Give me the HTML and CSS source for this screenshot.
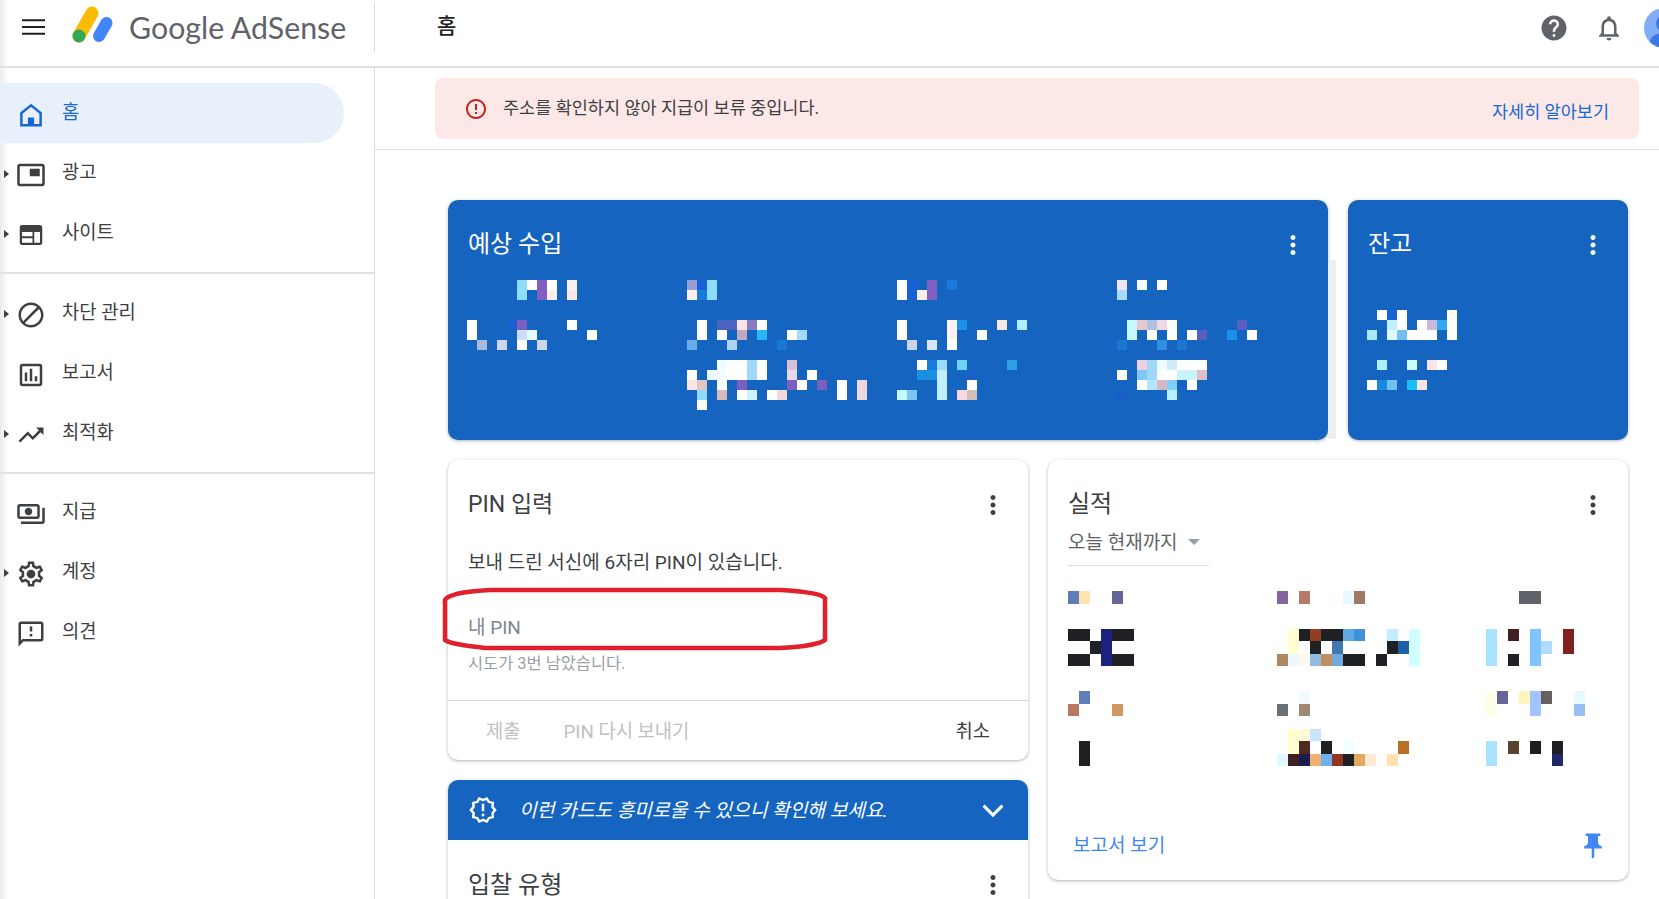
FILE: index.html
```html
<!DOCTYPE html>
<html lang="ko">
<head>
<meta charset="utf-8">
<title>Google AdSense</title>
<link rel="stylesheet" href="styles.css">
</head>
<body>
<header class="topbar">
  <div class="brand">
    <svg class="menu-icon" viewBox="0 0 24 16"><path d="M0 0h24v2H0zM0 7h24v2H0zM0 14h24v2H0z"/></svg>
    <svg class="logo" viewBox="0 0 46 44"><path d="M21 8 8 31" stroke="#fbbc04" stroke-width="13" stroke-linecap="round"/><path d="M35.500 18 28 31" stroke="#4285f4" stroke-width="12" stroke-linecap="round"/><circle cx="8" cy="31" r="6.500" fill="#34a853"/></svg>
    <span class="brand-name">Google AdSense</span>
  </div>
  <div class="page-title">홈</div>
  <div class="top-actions">
    <svg class="icon grey" viewBox="0 0 24 24"><path d="M12 2C6.480 2 2 6.480 2 12s4.480 10 10 10 10-4.480 10-10S17.520 2 12 2zm1 17h-2v-2h2v2zm2.070-7.750l-.9.920C13.450 12.900 13 13.500 13 15h-2v-.5c0-1.100.45-2.100 1.170-2.830l1.240-1.260c.37-.36.59-.86.59-1.410 0-1.100-.9-2-2-2s-2 .9-2 2H8c0-2.210 1.790-4 4-4s4 1.790 4 4c0 .88-.36 1.680-.93 2.250z"/></svg>
    <svg class="icon grey" viewBox="0 0 24 24"><path d="M12 22c1.100 0 2-.9 2-2h-4c0 1.100.9 2 2 2zm6-6v-5c0-3.070-1.630-5.640-4.500-6.320V4c0-.83-.67-1.500-1.500-1.500s-1.500.67-1.500 1.500v.68C7.640 5.360 6 7.920 6 11v5l-2 2v1h16v-1l-2-2zm-2 1H8v-6c0-2.480 1.510-4.500 4-4.500s4 2.020 4 4.500v6z"/></svg>
    <svg class="avatar" viewBox="0 0 40 40"><circle cx="20" cy="20" r="20" fill="#82adf5"/><circle cx="20" cy="15.500" r="8" fill="#3b78e7"/><path d="M6 34c0-6 7-9 14-9s14 3 14 9a20 20 0 0 1-28 0z" fill="#3b78e7"/></svg>
  </div>
</header>

<div class="layout">
  <nav class="sidebar">
    <div class="nav-group first">
      <a class="nav-item active">
        <svg class="icon" viewBox="0 0 24 24"><path class="home-line" d="M12 4.300 4.300 10.500v9.700h15.400v-9.700z"/><path d="M9.500 14h5v6h-5z"/></svg>
        <span>홈</span>
      </a>
      <a class="nav-item has-children">
        <svg class="icon" viewBox="0 0 24 24"><path d="M19 7h-8v6h8V7zm2-4H3c-1.100 0-2 .9-2 2v14c0 1.100.9 2 2 2h18c1.100 0 2-.9 2-2V5c0-1.100-.9-2-2-2zm0 16.010H3V4.980h18v14.030z"/></svg>
        <span>광고</span>
      </a>
      <a class="nav-item has-children">
        <svg class="icon" viewBox="0 0 24 24"><path fill-rule="evenodd" d="M5 4h14a2 2 0 0 1 2 2v12a2 2 0 0 1-2 2H5a2 2 0 0 1-2-2V6a2 2 0 0 1 2-2zM4.800 9.500V13h8.400V9.500zM14.600 9.500v8.700h4.600V9.500zM4.800 14.500v3.700h8.400v-3.700z"/></svg>
        <span>사이트</span>
      </a>
    </div>
    <div class="nav-group">
      <a class="nav-item has-children">
        <svg class="icon" viewBox="0 0 24 24"><path d="M12 2C6.480 2 2 6.480 2 12s4.480 10 10 10 10-4.480 10-10S17.520 2 12 2zM4 12c0-4.420 3.580-8 8-8 1.850 0 3.550.63 4.900 1.690L5.690 16.900C4.630 15.550 4 13.850 4 12zm8 8c-1.850 0-3.550-.63-4.900-1.690L18.310 7.100C19.370 8.450 20 10.150 20 12c0 4.420-3.580 8-8 8z"/></svg>
        <span>차단 관리</span>
      </a>
      <a class="nav-item">
        <svg class="icon" viewBox="0 0 24 24"><path d="M19 3H5c-1.100 0-2 .9-2 2v14c0 1.100.9 2 2 2h14c1.100 0 2-.9 2-2V5c0-1.100-.9-2-2-2zm0 16H5V5h14v14zM7 10h2v7H7zm4-3h2v10h-2zm4 6h2v4h-2z"/></svg>
        <span>보고서</span>
      </a>
      <a class="nav-item has-children">
        <svg class="icon" viewBox="0 0 24 24"><path d="M16 6l2.290 2.290-4.880 4.880-4-4L2 16.590 3.410 18l6-6 4 4 6.300-6.290L22 12V6z"/></svg>
        <span>최적화</span>
      </a>
    </div>
    <div class="nav-group last">
      <a class="nav-item">
        <svg class="icon" viewBox="0 0 24 24"><path d="M19 14V6c0-1.100-.9-2-2-2H3c-1.100 0-2 .9-2 2v8c0 1.100.9 2 2 2h14c1.100 0 2-.9 2-2zm-2 0H3V6h14v8zm-7-7c-1.660 0-3 1.340-3 3s1.340 3 3 3 3-1.340 3-3-1.340-3-3-3zm13 0v11c0 1.100-.9 2-2 2H4v-2h17V7h2z"/></svg>
        <span>지급</span>
      </a>
      <a class="nav-item has-children">
        <svg class="icon" viewBox="0 0 24 24"><path d="M19.430 12.980c.04-.32.07-.64.07-.98 0-.34-.03-.66-.07-.98l2.110-1.650c.19-.15.24-.42.12-.64l-2-3.460c-.09-.16-.26-.25-.44-.25-.06 0-.12.01-.17.03l-2.490 1c-.52-.4-1.080-.73-1.690-.98l-.38-2.650C14.460 2.180 14.250 2 14 2h-4c-.25 0-.46.18-.49.42l-.38 2.650c-.61.25-1.170.59-1.690.98l-2.490-1c-.06-.02-.12-.03-.18-.03-.17 0-.34.09-.43.25l-2 3.460c-.13.22-.07.49.12.64l2.110 1.650c-.04.32-.07.65-.07.98 0 .33.03.66.07.98l-2.110 1.650c-.19.15-.24.42-.12.64l2 3.460c.09.16.26.25.44.25.06 0 .12-.01.17-.03l2.490-1c.52.4 1.080.73 1.690.98l.38 2.650c.03.24.24.42.49.42h4c.25 0 .46-.18.49-.42l.38-2.650c.61-.25 1.170-.59 1.690-.98l2.490 1c.06.02.12.03.18.03.17 0 .34-.09.43-.25l2-3.460c.12-.22.07-.49-.12-.64l-2.110-1.650zm-1.980-1.710c.04.31.05.52.05.73 0 .21-.02.43-.05.73l-.14 1.130.89.7 1.080.84-.7 1.210-1.270-.51-1.040-.42-.9.68c-.43.32-.84.56-1.250.73l-1.060.43-.16 1.130-.2 1.350h-1.400l-.19-1.350-.16-1.130-1.060-.43c-.43-.18-.83-.41-1.230-.71l-.91-.7-1.060.43-1.270.51-.7-1.210 1.080-.84.89-.7-.14-1.130c-.03-.31-.05-.54-.05-.74s.02-.43.05-.73l.14-1.130-.89-.7-1.080-.84.7-1.210 1.270.51 1.040.42.9-.68c.43-.32.84-.56 1.250-.73l1.060-.43.16-1.130.2-1.350h1.390l.19 1.350.16 1.130 1.060.43c.43.18.83.41 1.230.71l.91.7 1.060-.43 1.270-.51.7 1.210-1.070.85-.89.7.14 1.130z"/><circle cx="12" cy="12" r="3.500"/></svg>
        <span>계정</span>
      </a>
      <a class="nav-item">
        <svg class="icon" viewBox="0 0 24 24"><path d="M20 2H4c-1.100 0-1.990.9-1.990 2L2 22l4-4h14c1.100 0 2-.9 2-2V4c0-1.100-.9-2-2-2zm0 14H5.170L4 17.170V4h16v12zm-9-4h2v2h-2zm0-6h2v4h-2z"/></svg>
        <span>의견</span>
      </a>
    </div>
  </nav>

  <main class="main">
    <div class="alert-wrap">
      <div class="alert">
        <svg class="alert-icon" viewBox="0 0 24 24"><path d="M11 15h2v2h-2zm0-8h2v6h-2zm.99-5C6.470 2 2 6.480 2 12s4.470 10 9.990 10C17.520 22 22 17.520 22 12S17.520 2 11.990 2zM12 20c-4.420 0-8-3.580-8-8s3.580-8 8-8 8 3.580 8 8-3.580 8-8 8z"/></svg>
        <span class="alert-text">주소를 확인하지 않아 지급이 보류 중입니다.</span>
        <a class="alert-link">자세히 알아보기</a>
      </div>
    </div>

    <div class="content">
      <div class="row-top">
        <section class="card blue earnings">
          <div class="card-head">
            <h2>예상 수입</h2>
            <svg class="icon kebab" viewBox="0 0 24 24"><path d="M12 8c1.100 0 2-.9 2-2s-.9-2-2-2-2 .9-2 2 .9 2 2 2zm0 2c-1.100 0-2 .9-2 2s.9 2 2 2 2-.9 2-2-.9-2-2-2zm0 6c-1.100 0-2 .9-2 2s.9 2 2 2 2-.9 2-2-.9-2-2-2z"/></svg>
          </div>
          <div class="stats">
            <svg class="mosaic" viewBox="0 0 20 13">
              <rect x="5" y="0" fill="#8fdcff"/><rect x="5" y="1" fill="#8fdcff"/><rect x="6" y="0" fill="#fff"/><rect x="7" y="0" fill="#8060c0"/><rect x="7" y="1" fill="#8060c0"/><rect x="8" y="0" fill="#fff"/><rect x="8" y="1" fill="#fdeef0"/><rect x="10" y="0" fill="#fdf0f0"/><rect x="10" y="1" fill="#f8e8e8"/>
              <rect x="0" y="4" fill="#fff"/><rect x="0" y="5" fill="#fff"/><rect x="1" y="6" fill="#a9b9dc"/><rect x="3" y="6" fill="#ccd5ec"/><rect x="4" y="4" fill="#1a5fd0"/><rect x="5" y="4" fill="#7a5fc0"/><rect x="5" y="5" fill="#c8defa"/><rect x="5" y="6" fill="#fff"/><rect x="6" y="5" fill="#ebfaff"/><rect x="7" y="6" fill="#ccd5ec"/><rect x="10" y="4" fill="#fff"/><rect x="12" y="5" fill="#fff"/>
            </svg>
            <svg class="mosaic" viewBox="0 0 20 13">
              <rect x="0" y="0" fill="#9a9dcf"/><rect x="0" y="1" fill="#fff0ee"/><rect x="1" y="0" fill="#1760d8"/><rect x="1" y="1" fill="#1a7ad8"/><rect x="2" y="0" fill="#8fdcff"/><rect x="2" y="1" fill="#8fdcff"/>
              <rect x="0" y="6" fill="#6aaee8"/><rect x="1" y="4" fill="#fff"/><rect x="1" y="5" fill="#fff"/><rect x="3" y="4" fill="#4a62c0"/><rect x="3" y="5" fill="#fff"/><rect x="4" y="4" fill="#4a62c0"/><rect x="4" y="6" fill="#b0d4f5"/><rect x="5" y="4" fill="#fde4e4"/><rect x="5" y="5" fill="#c0a8c0"/><rect x="6" y="4" fill="#8a7cc0"/><rect x="7" y="4" fill="#fff"/><rect x="7" y="5" fill="#2ab8f5"/><rect x="9" y="6" fill="#1a78d0"/><rect x="10" y="5" fill="#fff"/><rect x="11" y="5" fill="#a0dcff"/>
              <rect x="0" y="9" fill="#fff"/><rect x="0" y="10" fill="#fde4e4"/><rect x="1" y="10" fill="#e0c8c0"/><rect x="1" y="11" fill="#8fdcff"/><rect x="1" y="12" fill="#fff"/><rect x="2" y="9" fill="#eef8ff"/><rect x="3" y="8" fill="#f0fcff"/><rect x="3" y="9" fill="#f4fcff"/><rect x="3" y="10" fill="#fff"/><rect x="3" y="11" fill="#d8b8b8"/><rect x="4" y="8" fill="#fff"/><rect x="4" y="9" fill="#fff"/><rect x="5" y="8" fill="#fff"/><rect x="5" y="9" fill="#fff"/><rect x="5" y="10" fill="#7a5fc0"/><rect x="5" y="11" fill="#fff"/><rect x="6" y="8" fill="#a0d8fa"/><rect x="6" y="9" fill="#a0d8fa"/><rect x="6" y="11" fill="#d0f4ff"/><rect x="7" y="8" fill="#fff"/><rect x="7" y="9" fill="#fff"/><rect x="8" y="11" fill="#fff"/><rect x="9" y="11" fill="#f4d8dc"/><rect x="10" y="8" fill="#d8c0d8"/><rect x="10" y="9" fill="#e8d8e4"/><rect x="10" y="10" fill="#7a5fc0"/><rect x="11" y="10" fill="#fff"/><rect x="12" y="9" fill="#fff"/><rect x="13" y="10" fill="#7a5fc0"/><rect x="15" y="10" fill="#fff"/><rect x="15" y="11" fill="#fff"/><rect x="17" y="10" fill="#eed8e0"/><rect x="17" y="11" fill="#eed8e0"/>
            </svg>
            <svg class="mosaic" viewBox="0 0 20 13">
              <rect x="0" y="0" fill="#fff"/><rect x="0" y="1" fill="#fff"/><rect x="1" y="0" fill="#1760d8"/><rect x="1" y="1" fill="#1760d8"/><rect x="2" y="1" fill="#fdeee8"/><rect x="3" y="0" fill="#8060c0"/><rect x="3" y="1" fill="#8060c0"/><rect x="5" y="0" fill="#1a78d8"/>
              <rect x="0" y="4" fill="#fff"/><rect x="0" y="5" fill="#fff"/><rect x="1" y="6" fill="#ccd5ec"/><rect x="3" y="6" fill="#d8e4f4"/><rect x="5" y="4" fill="#fdf2f0"/><rect x="5" y="5" fill="#fdf2f0"/><rect x="5" y="6" fill="#fff"/><rect x="6" y="4" fill="#1a90e8"/><rect x="8" y="5" fill="#fff"/><rect x="10" y="4" fill="#f8e8e8"/><rect x="12" y="4" fill="#b0eeff"/>
              <rect x="0" y="11" fill="#c8f8ff"/><rect x="1" y="11" fill="#80c4f5"/><rect x="2" y="8" fill="#fff"/><rect x="2" y="9" fill="#1a90e0"/><rect x="3" y="8" fill="#1a7ad8"/><rect x="3" y="9" fill="#1a90e0"/><rect x="4" y="8" fill="#9adcfa"/><rect x="4" y="9" fill="#c8ecff"/><rect x="4" y="10" fill="#c0f0ff"/><rect x="4" y="11" fill="#c0f0ff"/><rect x="6" y="8" fill="#70d0f5"/><rect x="7" y="9" fill="#1a60c8"/><rect x="6" y="11" fill="#fad8dc"/><rect x="7" y="10" fill="#fff"/><rect x="7" y="11" fill="#d0c0b8"/><rect x="11" y="8" fill="#30a0e8"/>
            </svg>
            <svg class="mosaic" viewBox="0 0 20 13">
              <rect x="0" y="0" fill="#f0e8f0"/><rect x="0" y="1" fill="#a8dcfa"/><rect x="2" y="0" fill="#f4ffff"/><rect x="4" y="0" fill="#fff"/>
              <rect x="0" y="6" fill="#1a78d0"/><rect x="1" y="4" fill="#c8f8ff"/><rect x="1" y="5" fill="#c8f8ff"/><rect x="2" y="4" fill="#e8c8d0"/><rect x="3" y="4" fill="#b0c0e0"/><rect x="3" y="5" fill="#fff"/><rect x="4" y="4" fill="#f4d8e0"/><rect x="4" y="6" fill="#3090e0"/><rect x="5" y="4" fill="#fff"/><rect x="5" y="5" fill="#fff"/><rect x="6" y="6" fill="#1a78d0"/><rect x="7" y="5" fill="#fff"/><rect x="8" y="5" fill="#5a5ec0"/><rect x="11" y="5" fill="#1a90e8"/><rect x="12" y="4" fill="#5a5ec0"/><rect x="13" y="5" fill="#fff"/>
              <rect x="0" y="9" fill="#fff"/><rect x="0" y="11" fill="#1a5cc8"/><rect x="2" y="8" fill="#ecd0dc"/><rect x="2" y="9" fill="#80c8f5"/><rect x="2" y="10" fill="#fff"/><rect x="3" y="8" fill="#a0d8fa"/><rect x="3" y="9" fill="#a0d8fa"/><rect x="3" y="10" fill="#b0e8ff"/><rect x="4" y="8" fill="#f0faff"/><rect x="4" y="9" fill="#f8fdff"/><rect x="4" y="10" fill="#d8b8c0"/><rect x="5" y="8" fill="#d0ecfa"/><rect x="5" y="9" fill="#fff"/><rect x="5" y="10" fill="#80d0fa"/><rect x="5" y="11" fill="#b8f0ff"/><rect x="6" y="8" fill="#fff"/><rect x="6" y="9" fill="#c8f4ff"/><rect x="7" y="8" fill="#fff"/><rect x="7" y="9" fill="#c8f4ff"/><rect x="7" y="10" fill="#fff"/><rect x="8" y="8" fill="#fff"/><rect x="8" y="9" fill="#e0c0c8"/>
            </svg>
          </div>
          <div class="stripe"></div>
        </section>
        <section class="card blue balance">
          <div class="card-head">
            <h2>잔고</h2>
            <svg class="icon kebab" viewBox="0 0 24 24"><path d="M12 8c1.100 0 2-.9 2-2s-.9-2-2-2-2 .9-2 2 .9 2 2 2zm0 2c-1.100 0-2 .9-2 2s.9 2 2 2 2-.9 2-2-.9-2-2-2zm0 6c-1.100 0-2 .9-2 2s.9 2 2 2 2-.9 2-2-.9-2-2-2z"/></svg>
          </div>
          <div class="stats single">
            <svg class="mosaic" viewBox="0 0 20 13">
              <rect x="0" y="5" fill="#a8e8ff"/><rect x="1" y="3" fill="#fff"/><rect x="2" y="3" fill="#1760d8"/><rect x="2" y="4" fill="#c0f0ff"/><rect x="2" y="5" fill="#e0fbff"/><rect x="3" y="3" fill="#fff"/><rect x="3" y="4" fill="#fff"/><rect x="3" y="5" fill="#70c0f0"/><rect x="4" y="5" fill="#fff"/><rect x="5" y="4" fill="#fff"/><rect x="5" y="5" fill="#fff"/><rect x="6" y="4" fill="#ccb8d8"/><rect x="6" y="5" fill="#fff"/><rect x="7" y="4" fill="#30a8f0"/><rect x="8" y="3" fill="#fffff8"/><rect x="8" y="4" fill="#fffff8"/><rect x="8" y="5" fill="#fffff8"/>
              <rect x="1" y="8" fill="#b0f0ff"/><rect x="4" y="8" fill="#ccffff"/><rect x="6" y="8" fill="#fde4e8"/><rect x="7" y="8" fill="#fff"/><rect x="0" y="10" fill="#fff"/><rect x="1" y="10" fill="#1a88e0"/><rect x="2" y="10" fill="#70c0f0"/><rect x="4" y="10" fill="#18c0f8"/><rect x="5" y="10" fill="#fde4e4"/>
            </svg>
          </div>
        </section>
      </div>

      <div class="row-bottom">
        <div class="column">
          <section class="card pin-card">
            <div class="card-head">
              <h2>PIN 입력</h2>
              <svg class="icon kebab" viewBox="0 0 24 24"><path d="M12 8c1.100 0 2-.9 2-2s-.9-2-2-2-2 .9-2 2 .9 2 2 2zm0 2c-1.100 0-2 .9-2 2s.9 2 2 2 2-.9 2-2-.9-2-2-2zm0 6c-1.100 0-2 .9-2 2s.9 2 2 2 2-.9 2-2-.9-2-2-2z"/></svg>
            </div>
            <p class="pin-desc">보내 드린 서신에 6자리 PIN이 있습니다.</p>
            <p class="pin-label">내 PIN</p>
            <p class="pin-help">시도가 3번 남았습니다.</p>
            <div class="pin-actions">
              <span class="action muted">제출</span>
              <span class="action muted">PIN 다시 보내기</span>
              <span class="action cancel">취소</span>
            </div>
            <svg class="annotation" viewBox="0 0 392 68"><path d="M50 4H340C360 5 380 7 385 12V54C380 58 360 61 340 62H45C28 60 10 58 5 54V14C8 8 30 5 50 4z"/></svg>
          </section>
          <section class="card bid-card">
            <div class="suggest">
              <svg class="suggest-icon" viewBox="0 0 24 24"><path d="M23 12l-2.440-2.780.34-3.680-3.610-.82-1.890-3.180L12 3 8.600 1.540 6.710 4.720l-3.610.81.34 3.680L1 12l2.440 2.780-.34 3.690 3.610.82 1.890 3.180L12 21l3.400 1.460 1.890-3.180 3.610-.82-.34-3.680L23 12zm-4.090 1.900-.26.24.03.36.24 2.470-2.410.55-.35.08-.18.31-1.260 2.130-2.270-.98-.33-.14-.33.14-2.270.98-1.260-2.120-.18-.31-.35-.08-2.410-.55.24-2.480.03-.36-.24-.27L3.660 12l1.640-1.870.24-.27-.03-.36-.24-2.470 2.410-.54.35-.08.18-.31 1.260-2.130 2.270.98.33.14.33-.14 2.270-.98 1.260 2.130.18.31.35.08 2.410.55-.24 2.470-.03.36.24.27L20.340 12l-1.430 1.900zM11 15h2v2h-2zm0-8h2v6h-2z"/></svg>
              <span class="suggest-text">이런 카드도 흥미로울 수 있으니 확인해 보세요.</span>
              <svg class="chevron" viewBox="0 0 24 24"><path d="M4.500 8.500 12 16l7.500-7.500"/></svg>
            </div>
            <div class="bid-head">
              <h2>입찰 유형</h2>
              <svg class="icon kebab" viewBox="0 0 24 24"><path d="M12 8c1.100 0 2-.9 2-2s-.9-2-2-2-2 .9-2 2 .9 2 2 2zm0 2c-1.100 0-2 .9-2 2s.9 2 2 2 2-.9 2-2-.9-2-2-2zm0 6c-1.100 0-2 .9-2 2s.9 2 2 2 2-.9 2-2-.9-2-2-2z"/></svg>
            </div>
          </section>
        </div>

        <section class="card perf-card">
          <div class="card-head">
            <h2>실적</h2>
            <svg class="icon kebab" viewBox="0 0 24 24"><path d="M12 8c1.100 0 2-.9 2-2s-.9-2-2-2-2 .9-2 2 .9 2 2 2zm0 2c-1.100 0-2 .9-2 2s.9 2 2 2 2-.9 2-2-.9-2-2-2zm0 6c-1.100 0-2 .9-2 2s.9 2 2 2 2-.9 2-2-.9-2-2-2z"/></svg>
          </div>
          <div class="range">
            <span>오늘 현재까지</span>
            <i class="range-arrow"></i>
          </div>
          <div class="perf-grid">
            <svg class="mosaic tall" viewBox="0 0 17 14" preserveAspectRatio="none">
              <rect x="0" y="0" fill="#5f7db8"/><rect x="1" y="0" fill="#fde4b0"/><rect x="4" y="0" fill="#66659a"/>
              <rect x="0" y="3" fill="#202124"/><rect x="1" y="3" fill="#202124"/><rect x="0" y="5" fill="#202124"/><rect x="1" y="5" fill="#202124"/><rect x="2" y="4" fill="#202124"/><rect x="3" y="3" fill="#1c2080"/><rect x="3" y="4" fill="#1c2080"/><rect x="3" y="5" fill="#1c2080"/><rect x="4" y="3" fill="#202124"/><rect x="5" y="3" fill="#202124"/><rect x="4" y="5" fill="#202124"/><rect x="5" y="5" fill="#202124"/>
              <rect x="1" y="8" fill="#5f7db8"/><rect x="0" y="9" fill="#b87860"/><rect x="4" y="9" fill="#d09860"/>
              <rect x="1" y="12" fill="#202124"/><rect x="1" y="13" fill="#202124"/>
            </svg>
            <svg class="mosaic tall" viewBox="0 0 17 14" preserveAspectRatio="none">
              <rect x="0" y="0" fill="#84649c"/><rect x="2" y="0" fill="#b87a68"/><rect x="6" y="0" fill="#e8f8ff"/><rect x="7" y="0" fill="#a07868"/>
              <rect x="0" y="5" fill="#b08860"/><rect x="1" y="3" fill="#ffffd0"/><rect x="1" y="4" fill="#ffffd0"/><rect x="1" y="5" fill="#f0f8ff"/><rect x="2" y="3" fill="#202124"/><rect x="2" y="5" fill="#fff8f0"/><rect x="3" y="3" fill="#904020"/><rect x="3" y="4" fill="#202124"/><rect x="3" y="5" fill="#90bce0"/><rect x="4" y="3" fill="#202124"/><rect x="4" y="5" fill="#c09060"/><rect x="5" y="3" fill="#202124"/><rect x="5" y="4" fill="#4078b0"/><rect x="5" y="5" fill="#70a8e0"/><rect x="6" y="3" fill="#60a8e0"/><rect x="6" y="5" fill="#202124"/><rect x="7" y="3" fill="#4090d8"/><rect x="7" y="5" fill="#202124"/><rect x="9" y="5" fill="#202124"/><rect x="10" y="3" fill="#c0f0ff"/><rect x="10" y="4" fill="#202124"/><rect x="11" y="4" fill="#2060a8"/><rect x="12" y="3" fill="#d0ffff"/><rect x="12" y="4" fill="#d0ffff"/><rect x="12" y="5" fill="#d0ffff"/>
              <rect x="0" y="9" fill="#687078"/><rect x="2" y="8" fill="#f0faff"/><rect x="2" y="9" fill="#a08870"/>
              <rect x="1" y="11" fill="#ffffd0"/><rect x="1" y="12" fill="#ffffd0"/><rect x="0" y="13" fill="#e0f8ff"/><rect x="1" y="13" fill="#402020"/><rect x="2" y="11" fill="#fff8d8"/><rect x="2" y="12" fill="#502820"/><rect x="2" y="13" fill="#1c1c50"/><rect x="3" y="11" fill="#c8e4ff"/><rect x="3" y="13" fill="#f0b070"/><rect x="4" y="12" fill="#202124"/><rect x="4" y="13" fill="#70b0f0"/><rect x="5" y="13" fill="#903820"/><rect x="6" y="12" fill="#f0ffff"/><rect x="6" y="13" fill="#202124"/><rect x="7" y="13" fill="#e0a860"/><rect x="8" y="13" fill="#ffe8d8"/><rect x="10" y="13" fill="#ffe0b0"/><rect x="11" y="12" fill="#b87028"/>
            </svg>
            <svg class="mosaic tall" viewBox="0 0 17 14" preserveAspectRatio="none">
              <rect x="3" y="0" fill="#606468"/><rect x="4" y="0" fill="#606468"/>
              <rect x="0" y="3" fill="#a8e4ff"/><rect x="0" y="4" fill="#a8e4ff"/><rect x="0" y="5" fill="#a8e4ff"/><rect x="2" y="3" fill="#402020"/><rect x="2" y="5" fill="#202124"/><rect x="4" y="3" fill="#80c4ff"/><rect x="4" y="4" fill="#80c4ff"/><rect x="4" y="5" fill="#80c4ff"/><rect x="5" y="4" fill="#b0dcff"/><rect x="7" y="3" fill="#802020"/><rect x="7" y="4" fill="#802020"/>
              <rect x="0" y="8" fill="#ffffe8"/><rect x="0" y="9" fill="#ffffe8"/><rect x="1" y="8" fill="#66659a"/><rect x="3" y="8" fill="#fff4c0"/><rect x="4" y="8" fill="#a0c4ff"/><rect x="4" y="9" fill="#a0c4ff"/><rect x="5" y="8" fill="#686060"/><rect x="8" y="8" fill="#e8f8ff"/><rect x="8" y="9" fill="#98c0f0"/>
              <rect x="0" y="12" fill="#a8e4ff"/><rect x="0" y="13" fill="#a8e4ff"/><rect x="2" y="12" fill="#5a4430"/><rect x="4" y="12" fill="#201c1c"/><rect x="6" y="12" fill="#202124"/><rect x="6" y="13" fill="#202868"/>
            </svg>
          </div>
          <div class="perf-foot">
            <a class="report-link">보고서 보기</a>
            <svg class="icon pin-icon" viewBox="0 0 24 24"><path d="M16 9V4h1c.55 0 1-.45 1-1s-.45-1-1-1H7c-.55 0-1 .45-1 1s.45 1 1 1h1v5c0 1.660-1.340 3-3 3v2h5.970v7l1 1 1-1v-7H19v-2c-1.660 0-3-1.340-3-3z"/></svg>
          </div>
        </section>
      </div>
    </div>
  </main>
</div>
</body>
</html>
```
FILE: styles.css
```css
* { box-sizing: border-box; }
html, body { height: 100%; }
body {
  margin: 0;
  height: 899px;
  overflow: hidden;
  background: linear-gradient(90deg, #ececec, #fff 9px);
  color: #3c4043;
  font-family: Roboto, "Noto Sans CJK KR", sans-serif;
  font-size: 19px;
}
h2 { margin: 0; font-weight: 400; font-size: 24px; line-height: 30px; }
p { margin: 0; }

.topbar {
  display: flex;
  height: 68px;
  border-bottom: 2px solid #e0e0e0;
  overflow: hidden;
}
.brand {
  display: flex;
  align-items: center;
  width: 375px;
  height: 50px;
  margin-top: 2px;
  padding-left: 22px;
  border-right: 1px solid #dcdcdc;
  flex: none;
}
.menu-icon { width: 23px; height: 16px; fill: #202124; flex: none; }
.logo { width: 46px; height: 44px; margin-left: 26px; flex: none; }
.brand-name {
  margin-left: 12px;
  font-family: Lato, Roboto, sans-serif;
  font-size: 30.300px;
  color: #5f6368;
  white-space: nowrap;
}
.page-title {
  margin: 3px 0 0 62px;
  height: 50px;
  line-height: 46px;
  font-size: 21px;
  font-weight: 500;
  color: #202124;
}
.top-actions {
  display: flex;
  align-items: center;
  gap: 25px;
  height: 56px;
  margin-left: auto;
  margin-right: -25px;
}
.avatar { width: 40px; height: 40px; flex: none; margin-left: -5px; }

.icon { width: 30px; height: 30px; flex: none; fill: #3c4043; }
.grey { fill: #5f6368; }

.layout { display: flex; height: 831px; }
.sidebar {
  width: 375px;
  flex: none;
  border-right: 1px solid #dcdcdc;
}
.nav-group {
  padding: 9px 0;
  border-bottom: 2px solid #e0e0e0;
}
.nav-group.first { padding-top: 15px; }
.nav-group.last { border-bottom: 0; padding-top: 8px; }
.nav-item {
  position: relative;
  display: flex;
  align-items: center;
  gap: 16px;
  width: 344px;
  height: 60px;
  padding-left: 16px;
  border-radius: 0 30px 30px 0;
  font-size: 18.750px;
}
.nav-item span { margin-top: -5px; }
.nav-item .icon { margin-top: 4px; }
.nav-item.active { background: #e8f0fb; color: #1967d2; }
.nav-item.active .icon { fill: #1967d2; }
.home-line { fill: none; stroke: #1967d2; stroke-width: 2; }
.has-children::before {
  content: "";
  position: absolute;
  left: 4px;
  top: 27px;
  border-left: 5px solid #3c4043;
  border-top: 4px solid transparent;
  border-bottom: 4px solid transparent;
}

.main { flex: 1; min-width: 0; }
.alert-wrap {
  height: 82px;
  padding: 10px 20px 0 60px;
  border-bottom: 1px solid #e0e0e0;
}
.alert {
  position: relative;
  display: flex;
  align-items: center;
  height: 61px;
  padding: 0 30px 0 29px;
  background: #fce8e6;
  border-radius: 8px;
  font-size: 17.500px;
}
.alert-icon { width: 24px; height: 24px; fill: #c5221f; flex: none; }
.alert-text { margin-left: 15px; margin-top: -4px; color: #3c4043; }
.alert-link { margin-left: auto; margin-top: 4px; color: #1967d2; }

.content { padding: 50px 31px 0 73px; }
.row-top { display: flex; gap: 20px; }
.row-bottom { display: flex; gap: 20px; margin-top: 20px; }
.column { display: flex; flex-direction: column; gap: 20px; width: 580px; flex: none; }

.card {
  position: relative;
  background: #fff;
  border-radius: 10px;
  box-shadow: 0 1px 3px rgba(60, 64, 67, .3), 0 1px 4px rgba(60, 64, 67, .12);
}
.card.blue { background: #1565c0; color: #fff; height: 240px; }
.card.blue .icon { fill: #fff; }
.earnings { width: 880px; flex: none; }
.balance { width: 280px; flex: none; }
.card-head {
  display: flex;
  align-items: center;
  justify-content: space-between;
  height: 60px;
  padding: 30px 20px 0;
}
.card-head h2 { margin-top: -3px; }
.pin-card .card-head h2 { margin-top: -1px; font-size: 23px; }

.stats {
  display: grid;
  grid-template-columns: 220px 210px 220px 200px;
  margin-top: 20px;
  padding-left: 19px;
}
.stats.single { grid-template-columns: 200px; }
.mosaic { display: block; width: 200px; height: 130px; shape-rendering: crispEdges; }
.mosaic rect { width: 1px; height: 1px; }
.mosaic.tall { width: 187px; height: 175px; }
.stripe {
  position: absolute;
  left: 880px;
  top: 60px;
  width: 8px;
  height: 179px;
  background: #eee;
}

.pin-card { height: 300px; }
.pin-desc { margin: 31px 20px 0; line-height: 24px; color: #3c4043; }
.pin-label { margin: 41px 20px 0; line-height: 24px; color: #80868b; }
.pin-help { margin: 13px 20px 0; line-height: 22px; font-size: 16.400px; color: #9aa0a6; }
.pin-actions {
  display: flex;
  align-items: center;
  gap: 43px;
  height: 60px;
  margin-top: 25px;
  padding: 0 38px;
  border-top: 1px solid #dadce0;
  font-size: 18.750px;
}
.action { margin-top: -2px; }
.muted { color: #bdc1c6; }
.cancel { margin-left: auto; color: #3c4043; }
.annotation {
  position: absolute;
  left: -8px;
  top: 126px;
  width: 392px;
  height: 68px;
  fill: none;
  stroke: #e0202a;
  stroke-width: 4.500;
}

.bid-card { height: 300px; }
.suggest {
  display: flex;
  align-items: center;
  height: 60px;
  padding: 0 20px 0 20px;
  background: #1565c0;
  border-radius: 10px 10px 0 0;
  color: #fff;
  font-size: 19.200px;
}
.suggest-icon { width: 30px; height: 30px; fill: #fff; flex: none; }
.suggest-text { margin-left: 21px; margin-top: -3px; font-style: italic; }
.chevron {
  margin-left: auto;
  width: 30px;
  height: 30px;
  flex: none;
  fill: none;
  stroke: #fff;
  stroke-width: 2.500;
}
.bid-head {
  display: flex;
  align-items: center;
  justify-content: space-between;
  margin-top: 30px;
  padding: 0 20px;
  height: 30px;
}

.perf-card { width: 580px; height: 420px; flex: none; }
.range {
  display: flex;
  align-items: center;
  gap: 10px;
  width: 141px;
  height: 46px;
  margin-left: 20px;
  padding-bottom: 5px;
  border-bottom: 1px solid #dadce0;
  color: #5f6368;
  white-space: nowrap;
}
.range-arrow {
  display: block;
  margin-top: 4px;
  border-top: 6px solid #9aa0a6;
  border-left: 6px solid transparent;
  border-right: 6px solid transparent;
}
.perf-grid {
  display: grid;
  grid-template-columns: 209px 209px 187px;
  margin-top: 25px;
  padding-left: 20px;
}
.perf-foot {
  display: flex;
  align-items: center;
  justify-content: space-between;
  height: 30px;
  margin-top: 64px;
  padding: 0 20px 0 25px;
}
.report-link { margin-top: -3px; color: #4285f4; }
.card .pin-icon { fill: #4285f4; margin-top: 2px; }
```
